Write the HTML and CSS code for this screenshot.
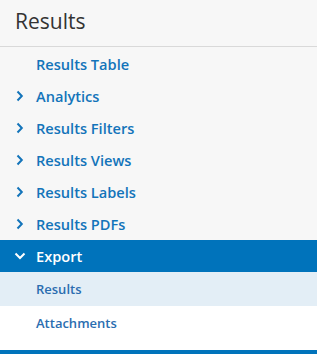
FILE: index.html
```html
<!DOCTYPE html>
<html lang="en">
<head>
  <meta charset="UTF-8" />
  <title>Results</title>
  <link rel="stylesheet" href="styles.css">
</head>
<body>
  <nav class="sidebar">
    <h2 class="sidebar-title">Results</h2>
    <ul class="menu">
      <li class="menu-item"><span class="chev"></span>Results Table</li>
      <li class="menu-item"><span class="chev"><svg viewBox="0 0 12 12"><path d="M3.5 1.5 L7.8 6 L3.5 10.5" /></svg></span>Analytics</li>
      <li class="menu-item"><span class="chev"><svg viewBox="0 0 12 12"><path d="M3.5 1.5 L7.8 6 L3.5 10.5" /></svg></span>Results Filters</li>
      <li class="menu-item"><span class="chev"><svg viewBox="0 0 12 12"><path d="M3.5 1.5 L7.8 6 L3.5 10.5" /></svg></span>Results Views</li>
      <li class="menu-item"><span class="chev"><svg viewBox="0 0 12 12"><path d="M3.5 1.5 L7.8 6 L3.5 10.5" /></svg></span>Results Labels</li>
      <li class="menu-item"><span class="chev"><svg viewBox="0 0 12 12"><path d="M3.5 1.5 L7.8 6 L3.5 10.5" /></svg></span>Results PDFs</li>
      <li class="menu-item open"><span class="chev"><svg viewBox="0 0 12 12"><path d="M1.5 3.5 L6 8 L10.5 3.5" /></svg></span>Export</li>
      <li class="sub-item active">Results</li>
      <li class="sub-item">Attachments</li>
    </ul>
    <div class="bottom-bar"></div>
  </nav>
</body>
</html>
```

FILE: styles.css
```css
body {
  margin: 0;
  font-family: 'Open Sans', sans-serif;
  background: #f7f7f7;
}

.sidebar {
  width: 317px;
  height: 354px;
  overflow: hidden;
  display: flex;
  flex-direction: column;
}

.sidebar-title {
  margin: 0;
  padding: 7px 15px 0;
  height: 39px;
  font-size: 21px;
  font-weight: 400;
  color: #333;
  border-bottom: 1px solid #d9d9d9;
}

.menu {
  list-style: none;
  margin: 0;
  padding: 0;
  padding-top: 1px;
}

.menu-item {
  height: 32px;
  display: flex;
  align-items: center;
  padding-left: 14px;
  font-size: 14.6px;
  font-weight: 600;
  color: #1374ba;
}

.chev {
  width: 22px;
  height: 12px;
  display: flex;
  align-items: center;
}

.chev svg {
  width: 12px;
  height: 12px;
  fill: none;
  stroke: currentColor;
  stroke-width: 2;
}

.menu-item.open {
  background: #0073bb;
  color: #fff;
}

.sub-item {
  height: 34px;
  display: flex;
  align-items: center;
  padding-left: 36px;
  font-size: 13px;
  font-weight: 600;
  color: #2a6db0;
  background: #fff;
}

.sub-item.active {
  background: #e3eef6;
}

.menu .sub-item:last-child {
  height: 44px;
  padding-bottom: 10px;
  box-sizing: border-box;
}

.bottom-bar {
  height: 4px;
  background: #0073bb;
}
```
